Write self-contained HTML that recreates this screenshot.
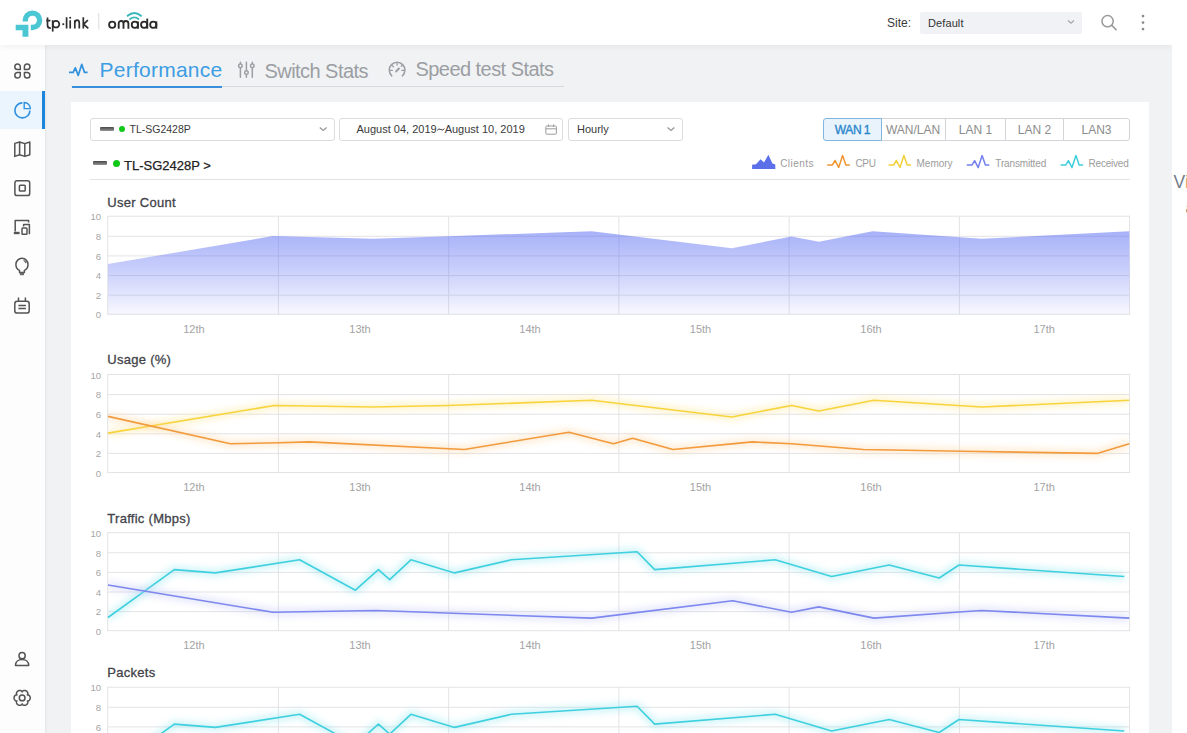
<!DOCTYPE html>
<html><head><meta charset="utf-8">
<style>
*{margin:0;padding:0;box-sizing:border-box}
html,body{width:1187px;height:733px;overflow:hidden;background:#fff;font-family:"Liberation Sans",sans-serif;color:#333}
.abs{position:absolute}
#app{position:absolute;left:0;top:0;width:1172px;height:733px;background:#f1f2f4;overflow:hidden}
#hdr{position:absolute;left:0;top:0;width:1172px;height:45px;background:#fff;box-shadow:0 2px 6px rgba(0,0,0,0.05);z-index:3}
#side{position:absolute;left:0;top:45px;width:45px;height:688px;background:#fdfdfd;box-shadow:1px 0 2px rgba(0,0,0,0.06);z-index:2}
#card{position:absolute;left:71px;top:102px;width:1078px;height:700px;background:#fff}
#rstrip{position:absolute;left:1172px;top:0;width:15px;height:733px;background:#fff;overflow:hidden}
.tab{position:absolute;font-size:20px;line-height:24px;color:#9b9ea3;white-space:nowrap}
.sel{position:absolute;top:118px;height:23px;border:1px solid #dcdcdf;border-radius:3px;background:#fff;font-size:11px;line-height:21px;color:#3a3a3a;white-space:nowrap}
.btn{position:absolute;top:118px;height:23px;border:1px solid #d4d4d8;border-left:none;font-size:12px;line-height:21px;padding-top:1.4px;text-align:center;color:#8c8c8c;background:#fff;white-space:nowrap}
.ttl{position:absolute;left:107.3px;font-size:13px;line-height:16px;color:#424349;-webkit-text-stroke:0.3px #424349;letter-spacing:0.28px;white-space:nowrap}
.leg{position:absolute;top:157.8px;font-size:10px;color:#9b9b9b;line-height:12px;white-space:nowrap}
.yl{position:absolute;left:80px;width:20.8px;text-align:right;font-size:9.6px;line-height:12px;color:#a6a6a6;letter-spacing:-0.2px}
.xl{position:absolute;width:40px;text-align:center;font-size:11px;line-height:12px;color:#a3a3a3}
</style></head>
<body>
<div id="app">
  <div id="card"></div>
  <div id="hdr">
    <svg class="abs" style="left:0;top:0" width="200" height="45" viewBox="0 0 200 45">
      <!-- tp-link mark -->
      <path d="M25.25,21.6 V20.3 A7.2,7.2 0 1 1 32.45,27.5 H30.8" fill="none" stroke="#4bc6d3" stroke-width="5.3"/>
      <path d="M15.7,24.8 H28.4 V36.8 H22.5 V30.3 H15.7 Z" fill="#4bc6d3"/>
      <!-- divider -->
      <rect x="98.3" y="13" width="1" height="16.5" fill="#dcdcdc"/>
      <!-- omada -->
      <g fill="none" stroke="#2b2b2b" stroke-width="1.85">
        <circle cx="112.2" cy="24.75" r="3.1"/>
        <path d="M118.7,28.7 V23.4 A2.4,2.4 0 0 1 123.5,23.4 V28.7 M123.5,23.4 A2.45,2.45 0 0 1 128.4,23.4 V28.7"/>
        <circle cx="134.85" cy="24.75" r="3.1"/>
        <path d="M137.95,21.4 V28.7"/>
        <circle cx="144.15" cy="24.75" r="3.1"/>
        <path d="M147.25,18.6 V28.7"/>
        <circle cx="153.25" cy="24.75" r="3.1"/>
        <path d="M156.35,21.4 V28.7"/>
      </g>
      <g fill="none" stroke="#38b6ba" stroke-width="1.9" stroke-linecap="round">
        <path d="M127.6,15.8 Q134.3,10.2 141,15.8"/>
        <path d="M130.1,18.9 Q134.3,15.8 138.4,18.9"/>
      </g>
    </svg>
    <svg class="abs" style="left:40px;top:10px" width="55" height="25" viewBox="40 10 55 25">
      <g fill="none" stroke="#2d2d2d" stroke-width="1.7">
        <path d="M47.5,17.4 V25.2 Q47.5,28.2 50.8,28.2 M46.2,20.6 H50.4"/>
        <path d="M52.7,20.2 V31.6"/>
        <circle cx="56" cy="24.2" r="3.3"/>
        <path d="M66.6,17.2 V28.4 M70.2,20.2 V28.4 M74.8,28.4 V20.2 M74.8,23.6 Q74.8,20.2 77.1,20.2 Q79.3,20.2 79.3,23.4 V28.4 M83.3,17.2 V28.4 M87.9,20.2 L83.6,24.2 L88.3,28.4"/>
      </g>
      <rect x="62.4" y="23.3" width="1.8" height="1.8" fill="#2d2d2d"/>
      <circle cx="70.2" cy="17.8" r="1" fill="#2d2d2d"/>
    </svg>
    <div class="abs" style="left:887px;top:16.3px;font-size:12px;line-height:15px;color:#3a3a3a">Site:</div>
    <div class="abs" style="left:920px;top:12px;width:162px;height:22px;background:#f0f2f6;border-radius:2px"></div>
    <div class="abs" style="left:928px;top:17.2px;font-size:11px;line-height:13px;color:#333;letter-spacing:0.1px">Default</div>
    <svg class="abs" style="left:1060px;top:12px" width="110" height="24" viewBox="1060 12 110 24">
      <path d="M1068,20.4 L1071,23.2 L1074,20.4" fill="none" stroke="#a8a8a8" stroke-width="1.3"/>
      <circle cx="1107.6" cy="21.2" r="5.6" fill="none" stroke="#9a9a9a" stroke-width="1.5"/>
      <path d="M1111.6,25.3 L1116,29.6" stroke="#9a9a9a" stroke-width="1.6" stroke-linecap="round"/>
      <circle cx="1143" cy="16.1" r="1.35" fill="#8c8c8c"/>
      <circle cx="1143" cy="22.6" r="1.35" fill="#8c8c8c"/>
      <circle cx="1143" cy="29.1" r="1.35" fill="#8c8c8c"/>
    </svg>
  </div>
  <div id="side">
    <div class="abs" style="left:0;top:45.5px;width:42px;height:38.5px;background:#ebf5fd"></div>
    <div class="abs" style="left:42px;top:45.5px;width:3px;height:38.5px;background:#1b86dc"></div>
    <svg class="abs" style="left:0;top:-45px" width="45" height="733" viewBox="0 0 45 733">
      <g fill="none" stroke="#545454" stroke-width="1.5" stroke-linejoin="round">
        <!-- dashboard petals -->
        <path d="M20.3,69.4 H17.55 A2.75,2.75 0 1 1 20.3,66.65 Z"/>
        <path d="M24.4,69.4 H27.15 A2.75,2.75 0 1 0 24.4,66.65 Z"/>
        <path d="M20.3,72.6 H17.55 A2.75,2.75 0 1 0 20.3,75.35 Z"/>
        <path d="M24.4,72.6 H27.15 A2.75,2.75 0 1 1 24.4,75.35 Z"/>
        <!-- map -->
        <path d="M14.8,143.4 L19.6,142 L24.8,143.6 L29.8,142 V154.8 L24.8,156.4 L19.6,154.8 L14.8,156.4 Z M19.6,142 V154.8 M24.8,143.6 V156.4"/>
        <!-- square -->
        <rect x="14.9" y="180.8" width="14.8" height="14.8" rx="2.2"/>
        <rect x="19.4" y="185.3" width="5.8" height="5.8" rx="0.8"/>
        <!-- devices -->
        <path d="M15.2,231.6 V220.6 H28.6 V222.6"/>
        <path d="M13.8,233 H19.6" stroke-width="2.4"/>
        <path d="M23.6,226.6 V224.6 H29.4 V234.2"/>
        <rect x="22" y="228" width="5" height="6.2" rx="0.8"/>
        <!-- bulb -->
        <path d="M19.5,272.6 V270.4 C17.2,269.2 15.9,267 15.9,264.4 A6.05,6.05 0 1 1 28,264.4 C28,267 26.7,269.2 24.4,270.4 V272.6 Z"/>
        <path d="M23.6,260.4 A4.2,4.2 0 0 1 26.1,263.2" stroke-width="1.1"/>
        <rect x="19.8" y="272.6" width="4.2" height="2.6" fill="#6a6a6a" stroke="none"/>
        <!-- plug -->
        <rect x="14.8" y="301.3" width="14.4" height="11.8" rx="2.4"/>
        <path d="M18.5,297.4 V301.3 M25.4,297.4 V301.3 M18.4,305.4 H25.9 M18.4,308.6 H25.9"/>
        <!-- user -->
        <circle cx="22.1" cy="655.7" r="3.1"/>
        <path d="M15.5,665.5 C15.5,661.8 18.4,659.5 22.1,659.5 C25.8,659.5 28.7,661.8 28.7,665.5 Z"/>
        <!-- gear -->
        <circle cx="22.15" cy="697.9" r="2.85"/>
      </g>
      <path d="M30.25,697.90 L30.22,698.32 L30.14,698.74 L30.01,699.15 L29.83,699.53 L29.59,699.89 L29.31,700.23 L28.97,700.52 L28.58,700.76 L28.11,700.94 L27.35,700.90 L27.76,701.54 L27.84,702.04 L27.83,702.50 L27.74,702.94 L27.60,703.35 L27.40,703.73 L27.16,704.09 L26.87,704.40 L26.55,704.68 L26.20,704.91 L25.82,705.10 L25.42,705.24 L25.00,705.33 L24.58,705.37 L24.14,705.34 L23.71,705.26 L23.29,705.12 L22.89,704.90 L22.50,704.58 L22.15,703.90 L21.80,704.58 L21.41,704.90 L21.01,705.12 L20.59,705.26 L20.16,705.34 L19.72,705.37 L19.30,705.33 L18.88,705.24 L18.48,705.10 L18.10,704.91 L17.75,704.68 L17.43,704.40 L17.14,704.09 L16.90,703.73 L16.70,703.35 L16.56,702.94 L16.47,702.50 L16.46,702.04 L16.54,701.54 L16.95,700.90 L16.19,700.94 L15.72,700.76 L15.33,700.52 L14.99,700.23 L14.71,699.89 L14.47,699.53 L14.29,699.15 L14.16,698.74 L14.08,698.32 L14.05,697.90 L14.08,697.48 L14.16,697.06 L14.29,696.65 L14.47,696.27 L14.71,695.91 L14.99,695.57 L15.33,695.28 L15.72,695.04 L16.19,694.86 L16.95,694.90 L16.54,694.26 L16.46,693.76 L16.47,693.30 L16.56,692.86 L16.70,692.45 L16.90,692.07 L17.14,691.71 L17.43,691.40 L17.75,691.12 L18.10,690.89 L18.48,690.70 L18.88,690.56 L19.30,690.47 L19.72,690.43 L20.16,690.46 L20.59,690.54 L21.01,690.68 L21.41,690.90 L21.80,691.22 L22.15,691.90 L22.50,691.22 L22.89,690.90 L23.29,690.68 L23.71,690.54 L24.14,690.46 L24.58,690.43 L25.00,690.47 L25.42,690.56 L25.82,690.70 L26.20,690.89 L26.55,691.12 L26.87,691.40 L27.16,691.71 L27.40,692.07 L27.60,692.45 L27.74,692.86 L27.83,693.30 L27.84,693.76 L27.76,694.26 L27.35,694.90 L28.11,694.86 L28.58,695.04 L28.97,695.28 L29.31,695.57 L29.59,695.91 L29.83,696.27 L30.01,696.65 L30.14,697.06 L30.22,697.48 Z" fill="none" stroke="#545454" stroke-width="1.5" stroke-linejoin="round"/>
      <g fill="none" stroke="#2e90e0" stroke-width="1.6">
        <path d="M22.4,102.9 A7.5,7.5 0 1 0 29.9,110.4"/>
        <path d="M24.2,102.5 V108.6 H30.3 A6.1,6.1 0 0 0 24.2,102.5 Z" stroke-width="1.4"/>
      </g>
    </svg>
  </div>
  <!-- tabs -->
  <svg class="abs" style="left:60px;top:55px" width="520" height="30" viewBox="60 55 520 30">
    <path d="M69,72.4 H73.2 L75.3,67.8 L78.2,75.4 L81.7,64.4 L84.5,72.4 H87.6" fill="none" stroke="#3092dc" stroke-width="1.7" stroke-linejoin="round"/>
    <g fill="none" stroke="#9b9ea3" stroke-width="1.5" stroke-linecap="round">
      <path d="M240.4,62.2 V77.2 M246.4,62.2 V77.2 M252.3,62.2 V77.2"/>
    </g>
    <g fill="#f1f2f4" stroke="#9b9ea3" stroke-width="1.4">
      <circle cx="240.4" cy="65.8" r="1.8"/>
      <circle cx="246.4" cy="72.6" r="1.8"/>
      <circle cx="252.3" cy="65.8" r="1.8"/>
    </g>
    <g fill="none" stroke="#9b9ea3" stroke-width="1.6" stroke-linecap="round">
      <path d="M391.8,75.8 A7.8,7.8 0 1 1 402.4,75.8"/>
      <path d="M396.2,71.4 L398.9,68.5" stroke-width="2.1"/>
      <path d="M397.1,63.4 V65.2 M390.6,70.4 H392.4 M401.8,70.4 H403.6 M392.3,65.6 L393.4,66.7 M402.1,65.4 L401.3,66.2" stroke-width="1.3"/>
    </g>
  </svg>
  <div class="tab" style="left:99.5px;top:58px;color:#3d9de3;font-size:21px;letter-spacing:0.25px">Performance</div>
  <div class="tab" style="left:264.5px;top:58.5px;letter-spacing:-0.55px">Switch Stats</div>
  <div class="tab" style="left:415.5px;top:57px;letter-spacing:-0.55px">Speed test Stats</div>
  <div class="abs" style="left:71px;top:86px;width:493px;height:1px;background:#d8dade"></div>
  <div class="abs" style="left:72px;top:85.5px;width:150px;height:2px;background:#3a8fdc"></div>

  <!-- controls -->
  <div class="sel" style="left:90px;width:245px"></div>
  <div class="abs" style="left:100px;top:126.9px;width:13.9px;height:4px;background:linear-gradient(180deg,#333 0%,#666 60%,#888 100%);border-radius:1px;opacity:0.9"></div>
  <div class="abs" style="left:119.2px;top:126px;width:5.9px;height:5.9px;background:#10c818;border-radius:50%"></div>
  <div class="abs" style="left:129.5px;top:123px;font-size:10.5px;line-height:13px;color:#3a3a3a">TL-SG2428P</div>
  <div class="sel" style="left:339px;width:224px"></div>
  <div class="abs" style="left:356.5px;top:123px;font-size:11px;line-height:13px;color:#3a3a3a">August 04, 2019<svg width="8" height="13" viewBox="0 0 8 13" style="vertical-align:top"><path d="M0.2,7.3 Q1.8,5.1 3.8,6.5 Q5.8,7.9 7.4,5.7" fill="none" stroke="#3a3a3a" stroke-width="1"/></svg>August 10, 2019</div>
  <div class="sel" style="left:567.5px;width:115.5px"></div>
  <div class="abs" style="left:577px;top:123px;font-size:11px;line-height:13px;color:#3a3a3a">Hourly</div>
  <svg class="abs" style="left:300px;top:115px" width="400" height="30" viewBox="300 115 400 30">
    <path d="M319.8,127.4 L323.2,130.4 L326.6,127.4" fill="none" stroke="#9a9a9a" stroke-width="1.4"/>
    <path d="M667.6,127.4 L671,130.4 L674.4,127.4" fill="none" stroke="#9a9a9a" stroke-width="1.4"/>
    <g fill="none" stroke="#9c9c9c" stroke-width="1">
      <rect x="545.8" y="126" width="10.6" height="8.2" rx="1"/>
      <path d="M545.8,128.8 H556.4 M548.6,124.4 V127 M553.6,124.4 V127"/>
    </g>
  </svg>
  <div class="btn" style="left:823px;width:59px;border-left:1px solid #80b6de;border-color:#80b6de;background:#e9f3fb;color:#2a87cd;-webkit-text-stroke:0.35px #2a87cd;letter-spacing:-0.35px;word-spacing:-0.5px;border-radius:3px 0 0 3px;z-index:1">WAN 1</div>
  <div class="btn" style="left:881px;width:65px;border-left:none">WAN/LAN</div>
  <div class="btn" style="left:945px;width:61px;border-left:1px solid #d4d4d8">LAN 1</div>
  <div class="btn" style="left:1005px;width:59px;border-left:1px solid #d4d4d8">LAN 2</div>
  <div class="btn" style="left:1063px;width:67px;border-left:1px solid #d4d4d8;border-radius:0 3px 3px 0">LAN3</div>

  <!-- device title -->
  <div class="abs" style="left:93.4px;top:161px;width:14.1px;height:4px;background:linear-gradient(180deg,#333 0%,#666 60%,#888 100%);border-radius:1px;opacity:0.9"></div>
  <div class="abs" style="left:112.85px;top:159.75px;width:7.2px;height:7.2px;background:#10c818;border-radius:50%"></div>
  <div class="abs" style="left:124px;top:157.5px;font-size:13px;line-height:15px;color:#222;-webkit-text-stroke:0.25px #222">TL-SG2428P &gt;</div>
  <div class="abs" style="left:89.5px;top:179px;width:1040px;height:1px;background:#e2e2e4"></div>

  <!-- legend -->
  <svg class="abs" style="left:745px;top:150px" width="400" height="24" viewBox="745 150 400 24">
    <path d="M752.1,169.1 V164.8 L756,164.2 L760.6,159.2 L764,162.6 L768.4,154.8 L772.4,163.6 L775.3,164.4 V169.1 Z" fill="#5a6fe8"/>
    <path d="M827.3,164.9 L832.4,164.9 L835.1,160.5 L838.7,167.4 L842.6,155.4 L845.9,164.9 L849.8,164.9" fill="none" stroke="#ee9530" stroke-width="1.5" stroke-linejoin="round"/>
    <path d="M888.6,164.9 L893.7,164.9 L896.4,160.5 L900.0,167.4 L903.9,155.4 L907.2,164.9 L911.1,164.9" fill="none" stroke="#f3d03a" stroke-width="1.5" stroke-linejoin="round"/>
    <path d="M966.8,165.1 L971.9,165.1 L974.6,160.7 L978.2,167.6 L982.1,155.6 L985.4,165.1 L989.3,165.1" fill="none" stroke="#7380ec" stroke-width="1.5" stroke-linejoin="round"/>
    <path d="M1060.6,165.1 L1065.7,165.1 L1068.4,160.7 L1072.0,167.6 L1075.9,155.6 L1079.2,165.1 L1083.1,165.1" fill="none" stroke="#3fcfdc" stroke-width="1.5" stroke-linejoin="round"/>
  </svg>
  <div class="leg" style="left:780.2px;letter-spacing:0.45px">Clients</div>
  <div class="leg" style="left:855.4px;letter-spacing:-0.3px">CPU</div>
  <div class="leg" style="left:916.5px">Memory</div>
  <div class="leg" style="left:995.3px;letter-spacing:-0.15px">Transmitted</div>
  <div class="leg" style="left:1088.5px;letter-spacing:-0.2px">Received</div>

  <!-- chart titles -->
  <div class="ttl" style="top:194.5px">User Count</div>
  <div class="ttl" style="top:352.3px">Usage (%)</div>
  <div class="ttl" style="top:510.6px">Traffic (Mbps)</div>
  <div class="ttl" style="top:665px">Packets</div>

<svg class="abs" style="left:0;top:0" width="1172" height="733" viewBox="0 0 1172 733">
<defs>
<linearGradient id="gUC" x1="0" y1="0" x2="0" y2="1">
<stop offset="0" stop-color="#5064f2" stop-opacity="0.5"/>
<stop offset="0.5" stop-color="#5064f2" stop-opacity="0.29"/>
<stop offset="1" stop-color="#5064f2" stop-opacity="0.04"/>
</linearGradient>
<clipPath id="plotclip"><rect x="108" y="150" width="1021.3" height="700"/></clipPath>
<filter id="glow" x="-5%" y="-100%" width="110%" height="300%"><feGaussianBlur stdDeviation="3.5"/></filter>
</defs>
<rect x="107.7" y="216.2" width="1021.8999999999999" height="98.0" fill="none" stroke="#e3e3e6" stroke-width="1"/>
<line x1="108.2" y1="236.3" x2="1129.6" y2="236.3" stroke="#e3e3e6" stroke-width="1"/>
<line x1="108.2" y1="255.9" x2="1129.6" y2="255.9" stroke="#e3e3e6" stroke-width="1"/>
<line x1="108.2" y1="275.5" x2="1129.6" y2="275.5" stroke="#e3e3e6" stroke-width="1"/>
<line x1="108.2" y1="295.1" x2="1129.6" y2="295.1" stroke="#e3e3e6" stroke-width="1"/>
<line x1="278.4" y1="216.7" x2="278.4" y2="314.7" stroke="#e3e3e6" stroke-width="1"/>
<line x1="448.7" y1="216.7" x2="448.7" y2="314.7" stroke="#e3e3e6" stroke-width="1"/>
<line x1="618.9" y1="216.7" x2="618.9" y2="314.7" stroke="#e3e3e6" stroke-width="1"/>
<line x1="789.1" y1="216.7" x2="789.1" y2="314.7" stroke="#e3e3e6" stroke-width="1"/>
<line x1="959.4" y1="216.7" x2="959.4" y2="314.7" stroke="#e3e3e6" stroke-width="1"/>
<polygon points="108.2,314.7 108.0,264.0 273.0,236.1 373.0,238.8 448.0,236.3 591.7,231.2 731.8,248.2 791.5,236.5 818.8,241.8 872.5,231.2 981.7,238.8 1129.3,231.2 1129.6,314.7" fill="url(#gUC)"/>
<rect x="107.7" y="374.5" width="1021.8999999999999" height="98.0" fill="none" stroke="#e3e3e6" stroke-width="1"/>
<line x1="108.2" y1="394.6" x2="1129.6" y2="394.6" stroke="#e3e3e6" stroke-width="1"/>
<line x1="108.2" y1="414.2" x2="1129.6" y2="414.2" stroke="#e3e3e6" stroke-width="1"/>
<line x1="108.2" y1="433.8" x2="1129.6" y2="433.8" stroke="#e3e3e6" stroke-width="1"/>
<line x1="108.2" y1="453.4" x2="1129.6" y2="453.4" stroke="#e3e3e6" stroke-width="1"/>
<line x1="278.4" y1="375.0" x2="278.4" y2="473.0" stroke="#e3e3e6" stroke-width="1"/>
<line x1="448.7" y1="375.0" x2="448.7" y2="473.0" stroke="#e3e3e6" stroke-width="1"/>
<line x1="618.9" y1="375.0" x2="618.9" y2="473.0" stroke="#e3e3e6" stroke-width="1"/>
<line x1="789.1" y1="375.0" x2="789.1" y2="473.0" stroke="#e3e3e6" stroke-width="1"/>
<line x1="959.4" y1="375.0" x2="959.4" y2="473.0" stroke="#e3e3e6" stroke-width="1"/>
<polyline points="108.0,433.1 274.4,405.5 373.0,407.0 448.0,405.5 591.7,400.3 731.8,417.0 791.5,405.5 818.8,411.0 874.0,400.3 981.7,407.0 1129.3,400.3" fill="none" stroke="#ffe58a" stroke-width="7" opacity="0.45" filter="url(#glow)" clip-path="url(#plotclip)"/>
<polyline points="108.0,433.1 274.4,405.5 373.0,407.0 448.0,405.5 591.7,400.3 731.8,417.0 791.5,405.5 818.8,411.0 874.0,400.3 981.7,407.0 1129.3,400.3" fill="none" stroke="#f8d43c" stroke-width="1.6" stroke-linejoin="round"/>
<polyline points="108.0,416.4 230.4,443.7 279.0,442.8 309.3,441.9 464.3,449.5 568.9,432.2 613.5,443.7 632.6,438.2 673.0,449.5 752.4,441.9 791.5,443.7 863.4,449.5 962.0,451.3 1097.0,453.4 1129.3,443.7" fill="none" stroke="#ffd29a" stroke-width="7" opacity="0.45" filter="url(#glow)" clip-path="url(#plotclip)"/>
<polyline points="108.0,416.4 230.4,443.7 279.0,442.8 309.3,441.9 464.3,449.5 568.9,432.2 613.5,443.7 632.6,438.2 673.0,449.5 752.4,441.9 791.5,443.7 863.4,449.5 962.0,451.3 1097.0,453.4 1129.3,443.7" fill="none" stroke="#f29a3c" stroke-width="1.6" stroke-linejoin="round"/>
<rect x="107.7" y="532.7" width="1021.8999999999999" height="98.0" fill="none" stroke="#e3e3e6" stroke-width="1"/>
<line x1="108.2" y1="552.8" x2="1129.6" y2="552.8" stroke="#e3e3e6" stroke-width="1"/>
<line x1="108.2" y1="572.4" x2="1129.6" y2="572.4" stroke="#e3e3e6" stroke-width="1"/>
<line x1="108.2" y1="592.0" x2="1129.6" y2="592.0" stroke="#e3e3e6" stroke-width="1"/>
<line x1="108.2" y1="611.6" x2="1129.6" y2="611.6" stroke="#e3e3e6" stroke-width="1"/>
<line x1="278.4" y1="533.2" x2="278.4" y2="631.2" stroke="#e3e3e6" stroke-width="1"/>
<line x1="448.7" y1="533.2" x2="448.7" y2="631.2" stroke="#e3e3e6" stroke-width="1"/>
<line x1="618.9" y1="533.2" x2="618.9" y2="631.2" stroke="#e3e3e6" stroke-width="1"/>
<line x1="789.1" y1="533.2" x2="789.1" y2="631.2" stroke="#e3e3e6" stroke-width="1"/>
<line x1="959.4" y1="533.2" x2="959.4" y2="631.2" stroke="#e3e3e6" stroke-width="1"/>
<polyline points="108.0,617.5 174.3,569.6 215.3,572.9 299.6,559.8 355.4,590.2 378.4,569.6 389.7,579.6 410.9,559.8 454.6,572.9 511.3,559.8 637.1,551.7 654.7,569.6 775.2,559.8 831.6,576.5 889.2,565.0 939.2,578.0 959.0,565.0 1124.3,576.5" fill="none" stroke="#8ee6f0" stroke-width="7" opacity="0.45" filter="url(#glow)" clip-path="url(#plotclip)"/>
<polyline points="108.0,617.5 174.3,569.6 215.3,572.9 299.6,559.8 355.4,590.2 378.4,569.6 389.7,579.6 410.9,559.8 454.6,572.9 511.3,559.8 637.1,551.7 654.7,569.6 775.2,559.8 831.6,576.5 889.2,565.0 939.2,578.0 959.0,565.0 1124.3,576.5" fill="none" stroke="#3fd0df" stroke-width="1.6" stroke-linejoin="round"/>
<polyline points="108.0,585.0 272.9,612.3 376.0,610.5 460.0,613.5 591.7,618.1 732.7,600.8 791.5,612.3 818.8,606.9 874.0,618.1 959.0,612.0 981.7,610.5 1129.3,618.1" fill="none" stroke="#bfc5f8" stroke-width="7" opacity="0.45" filter="url(#glow)" clip-path="url(#plotclip)"/>
<polyline points="108.0,585.0 272.9,612.3 376.0,610.5 460.0,613.5 591.7,618.1 732.7,600.8 791.5,612.3 818.8,606.9 874.0,618.1 959.0,612.0 981.7,610.5 1129.3,618.1" fill="none" stroke="#7d87ee" stroke-width="1.6" stroke-linejoin="round"/>
<rect x="107.7" y="687.2" width="1021.8999999999999" height="98.0" fill="none" stroke="#e3e3e6" stroke-width="1"/>
<line x1="108.2" y1="707.3" x2="1129.6" y2="707.3" stroke="#e3e3e6" stroke-width="1"/>
<line x1="108.2" y1="726.9" x2="1129.6" y2="726.9" stroke="#e3e3e6" stroke-width="1"/>
<line x1="108.2" y1="746.5" x2="1129.6" y2="746.5" stroke="#e3e3e6" stroke-width="1"/>
<line x1="108.2" y1="766.1" x2="1129.6" y2="766.1" stroke="#e3e3e6" stroke-width="1"/>
<line x1="278.4" y1="687.7" x2="278.4" y2="785.7" stroke="#e3e3e6" stroke-width="1"/>
<line x1="448.7" y1="687.7" x2="448.7" y2="785.7" stroke="#e3e3e6" stroke-width="1"/>
<line x1="618.9" y1="687.7" x2="618.9" y2="785.7" stroke="#e3e3e6" stroke-width="1"/>
<line x1="789.1" y1="687.7" x2="789.1" y2="785.7" stroke="#e3e3e6" stroke-width="1"/>
<line x1="959.4" y1="687.7" x2="959.4" y2="785.7" stroke="#e3e3e6" stroke-width="1"/>
<polyline points="108.0,772.0 174.3,724.1 215.3,727.4 299.6,714.3 355.4,744.7 378.4,724.1 389.7,734.1 410.9,714.3 454.6,727.4 511.3,714.3 637.1,706.2 654.7,724.1 775.2,714.3 831.6,731.0 889.2,719.5 939.2,732.5 959.0,719.5 1124.3,731.0" fill="none" stroke="#8ee6f0" stroke-width="7" opacity="0.45" filter="url(#glow)" clip-path="url(#plotclip)"/>
<polyline points="108.0,772.0 174.3,724.1 215.3,727.4 299.6,714.3 355.4,744.7 378.4,724.1 389.7,734.1 410.9,714.3 454.6,727.4 511.3,714.3 637.1,706.2 654.7,724.1 775.2,714.3 831.6,731.0 889.2,719.5 939.2,732.5 959.0,719.5 1124.3,731.0" fill="none" stroke="#3fd0df" stroke-width="1.6" stroke-linejoin="round"/>
</svg>
<div class="yl" style="top:211.4px">10</div>
<div class="yl" style="top:231.0px">8</div>
<div class="yl" style="top:250.6px">6</div>
<div class="yl" style="top:270.2px">4</div>
<div class="yl" style="top:289.8px">2</div>
<div class="yl" style="top:309.4px">0</div>
<div class="xl" style="left:173.9px;top:322.9px">12th</div>
<div class="xl" style="left:340.0px;top:322.9px">13th</div>
<div class="xl" style="left:510.0px;top:322.9px">14th</div>
<div class="xl" style="left:680.5px;top:322.9px">15th</div>
<div class="xl" style="left:851.0px;top:322.9px">16th</div>
<div class="xl" style="left:1024.2px;top:322.9px">17th</div>
<div class="yl" style="top:369.7px">10</div>
<div class="yl" style="top:389.3px">8</div>
<div class="yl" style="top:408.9px">6</div>
<div class="yl" style="top:428.5px">4</div>
<div class="yl" style="top:448.1px">2</div>
<div class="yl" style="top:467.7px">0</div>
<div class="xl" style="left:173.9px;top:481.2px">12th</div>
<div class="xl" style="left:340.0px;top:481.2px">13th</div>
<div class="xl" style="left:510.0px;top:481.2px">14th</div>
<div class="xl" style="left:680.5px;top:481.2px">15th</div>
<div class="xl" style="left:851.0px;top:481.2px">16th</div>
<div class="xl" style="left:1024.2px;top:481.2px">17th</div>
<div class="yl" style="top:527.9px">10</div>
<div class="yl" style="top:547.5px">8</div>
<div class="yl" style="top:567.1px">6</div>
<div class="yl" style="top:586.7px">4</div>
<div class="yl" style="top:606.3px">2</div>
<div class="yl" style="top:625.9px">0</div>
<div class="xl" style="left:173.9px;top:639.4px">12th</div>
<div class="xl" style="left:340.0px;top:639.4px">13th</div>
<div class="xl" style="left:510.0px;top:639.4px">14th</div>
<div class="xl" style="left:680.5px;top:639.4px">15th</div>
<div class="xl" style="left:851.0px;top:639.4px">16th</div>
<div class="xl" style="left:1024.2px;top:639.4px">17th</div>
<div class="yl" style="top:682.4px">10</div>
<div class="yl" style="top:702.0px">8</div>
<div class="yl" style="top:721.6px">6</div>
<div class="yl" style="top:741.2px">4</div>
<div class="yl" style="top:760.8px">2</div>
<div class="yl" style="top:780.4px">0</div>
<div class="xl" style="left:173.9px;top:793.9px">12th</div>
<div class="xl" style="left:340.0px;top:793.9px">13th</div>
<div class="xl" style="left:510.0px;top:793.9px">14th</div>
<div class="xl" style="left:680.5px;top:793.9px">15th</div>
<div class="xl" style="left:851.0px;top:793.9px">16th</div>
<div class="xl" style="left:1024.2px;top:793.9px">17th</div>
</div>
<div id="rstrip">
  <div class="abs" style="left:1.6px;top:171.6px;font-size:17.5px;line-height:20px;color:#737b88;white-space:nowrap">V<span style="color:#e8a070">i</span></div>
  <div class="abs" style="left:13.8px;top:200px;font-size:14px;line-height:16px;color:#555">a</div>
</div>
</body></html>
